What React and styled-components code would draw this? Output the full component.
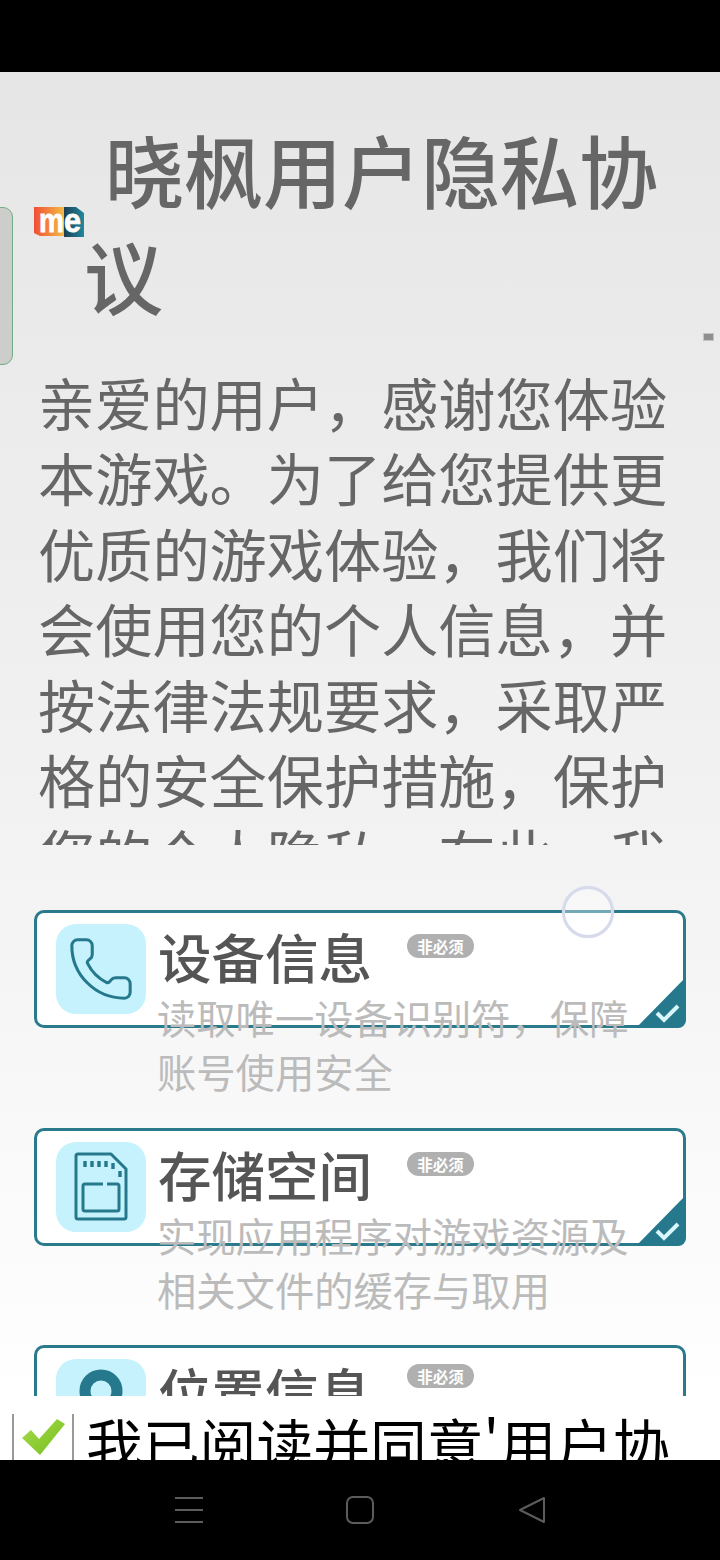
import React from "react";
import styled, { createGlobalStyle } from "styled-components";
import { Phone } from "lucide-react";

const GlobalStyle = createGlobalStyle`
  html, body {
    margin: 0;
    padding: 0;
    background: #000;
  }
  * {
    box-sizing: border-box;
  }
`;

const Page = styled.div`
  position: relative;
  width: 720px;
  height: 1560px;
  display: flex;
  flex-direction: column;
  overflow: hidden;
  background: #000;
  font-family: "Noto Sans CJK SC", "Noto Sans", sans-serif;
`;

const StatusBar = styled.div`
  height: 72px;
  flex: none;
  background: #000;
`;

const Screen = styled.main`
  flex: 1;
  min-height: 0;
  display: flex;
  flex-direction: column;
  background: linear-gradient(180deg, #e6e6e6 0%, #f3f3f3 58%, #ffffff 96%);
`;

const Header = styled.header`
  flex: none;
  display: flex;
  align-items: center;
  padding: 44px 0 0 34px;
`;

const Logo = styled.svg`
  flex: none;
  width: 50px;
  height: 31px;
`;

const Title = styled.h1`
  width: 600px;
  margin: 0;
  font-size: 79px;
  line-height: 106px;
  font-weight: 500;
  color: #666;
  text-indent: 21px;
`;

const Intro = styled.p`
  flex: none;
  width: 640px;
  height: 517px;
  margin: 0 0 0 38px;
  padding-top: 36px;
  overflow: hidden;
  font-size: 57.2px;
  line-height: 75.4px;
  color: #666;
`;

const List = styled.section`
  flex: 1;
  min-height: 0;
  margin-top: 65px;
  padding: 0 34px;
  overflow: hidden;
  display: flex;
  flex-direction: column;
  gap: 99.5px;
`;

const Card = styled.article`
  position: relative;
  flex: none;
  height: 118px;
  display: flex;
  gap: 14px;
  padding: 11px 0 0 19px;
  background: #fff;
  border: 3px solid #2a7a8c;
  border-radius: 10px;
`;

const Tile = styled.div`
  flex: none;
  width: 90px;
  height: 90px;
  display: flex;
  align-items: center;
  justify-content: center;
  background: #c5f2fd;
  border-radius: 20px;
  color: #26788c;
`;

const CardBody = styled.div`
  width: 490px;
`;

const CardHead = styled.div`
  display: flex;
  align-items: flex-start;
  gap: 35px;
`;

const CardTitle = styled.h2`
  margin: -3px 0 0 -2px;
  font-size: 53.5px;
  line-height: 70px;
  font-weight: 500;
  color: #555;
`;

const Badge = styled.span`
  width: 67px;
  height: 24px;
  margin-top: ${(p) => p.$top}px;
  display: flex;
  align-items: center;
  justify-content: center;
  background: #b0b0b0;
  border-radius: 12px;
  color: #fff;
  font-size: 15.5px;
  font-weight: 700;
`;

const CardText = styled.p`
  position: relative;
  margin: -1px 0 0 -3px;
  width: 480px;
  font-size: 39.3px;
  line-height: 54px;
  color: #bbb;
`;

const Corner = styled.svg`
  position: absolute;
  right: -3px;
  bottom: -3px;
  width: 50px;
  height: 51px;
`;

const Footer = styled.footer`
  flex: none;
  height: 64px;
  display: flex;
  gap: 12px;
  padding: 18px 0 0 12px;
  overflow: hidden;
  background: #fff;
`;

const CheckBox = styled.div`
  flex: none;
  width: 62px;
  height: 60px;
  display: flex;
  justify-content: center;
  padding-top: 4px;
  border-left: 2px solid #999;
  border-right: 2px solid #999;
`;

const Agree = styled.div`
  width: 600px;
  margin-top: -10px;
  font-size: 56.8px;
  line-height: 76px;
  color: #000;
`;

const NavBar = styled.nav`
  flex: none;
  height: 100px;
  display: flex;
  align-items: center;
  justify-content: center;
  gap: 143.5px;
  background: #000;
`;

const NavIcon = styled.svg`
  width: 28px;
  height: 28px;
  fill: none;
  stroke: #5c5c5c;
  stroke-width: 2;
`;

const SideTab = styled.div`
  position: absolute;
  left: -2px;
  top: 207px;
  width: 15px;
  height: 158px;
  background: #cdcecc;
  border: 1px solid #72ab85;
  border-radius: 0 10px 10px 0;
`;

const SideMark = styled.div`
  position: absolute;
  left: 703px;
  top: 333px;
  width: 11px;
  height: 8px;
  background: #8f8f8f;
  border: 1px solid #c4c4c4;
`;

const TouchRing = styled.div`
  position: absolute;
  left: 562px;
  top: 886px;
  width: 52px;
  height: 52px;
  border-radius: 50%;
  border: 3px solid #d6daea;
  background: rgba(255, 255, 255, 0.35);
  box-shadow: 0 0 1px #d6daea;
`;

function SdIcon() {
  return (
    <svg width="56" height="72" viewBox="0 0 56 72" fill="none" stroke="currentColor" strokeWidth="3" strokeLinejoin="round">
      <path d="M5 3 H38 L53 18 V66 a2 2 0 0 1 -2 2 H5 a2 2 0 0 1 -2 -2 V5 a2 2 0 0 1 2 -2 Z" />
      <path d="M34 33 H44 a2 2 0 0 1 2 2 V58 a2 2 0 0 1 -2 2 H12 a2 2 0 0 1 -2 -2 V35 a2 2 0 0 1 2 -2 H30" />
      <path d="M12 10 V16 M19 10 V16 M26 10 V16 M33 10 V16 M40 12 V18 M47 20 V26" strokeWidth="3.4" />
    </svg>
  );
}

function PinIcon() {
  return (
    <svg width="60" height="80" viewBox="0 0 60 80" fill="none" stroke="currentColor" strokeWidth="11">
      <circle cx="30" cy="27" r="16" />
    </svg>
  );
}

// full-width comma
const C = "\uFF0C";

const introText = `亲爱的用户${C}感谢您体验本游戏。为了给您提供更优质的游戏体验${C}我们将会使用您的个人信息${C}并按法律法规要求${C}采取严格的安全保护措施${C}保护您的个人隐私。在此${C}我们`;

const cards = [
  {
    title: "设备信息",
    text: `读取唯一设备识别符${C}保障账号使用安全`,
    icon: <Phone size={70} strokeWidth={1.05} />,
    badgeTop: 10,
  },
  {
    title: "存储空间",
    text: "实现应用程序对游戏资源及相关文件的缓存与取用",
    icon: <SdIcon />,
    badgeTop: 10,
  },
  {
    title: "位置信息",
    icon: <PinIcon />,
    badgeTop: 5,
  },
];

export default function App() {
  return (
    <Page lang="zh-CN">
      <GlobalStyle />
      <StatusBar />
      <Screen>
        <Header>
          <Logo viewBox="0 0 50 31">
            <defs>
              <linearGradient id="meLeft" x1="0" x2="1" y1="0" y2="0">
                <stop offset="0" stopColor="#ef4f36" />
                <stop offset="1" stopColor="#f6bb45" />
              </linearGradient>
              <linearGradient id="meRight" x1="0" x2="1" y1="0" y2="0">
                <stop offset="0" stopColor="#1d3f50" />
                <stop offset="1" stopColor="#1e8aa0" />
              </linearGradient>
            </defs>
            <path d="M0 0 H30 V29 H6 L0 26 Z" fill="url(#meLeft)" />
            <path d="M30 0 H42 L50 6 V30 H30 Z" fill="url(#meRight)" />
            <g fontFamily="'Liberation Sans', sans-serif" fontWeight="700" fontSize="34" fill="#fff" stroke="#fff" strokeWidth="0.8">
              <text x="5" y="25" textLength="25" lengthAdjust="spacingAndGlyphs">m</text>
              <text x="30" y="25" textLength="17" lengthAdjust="spacingAndGlyphs">e</text>
            </g>
          </Logo>
          <Title>晓枫用户隐私协议</Title>
        </Header>
        <Intro>{introText}</Intro>
        <List>
          {cards.map((card) => (
            <Card key={card.title}>
              <Tile>{card.icon}</Tile>
              <CardBody>
                <CardHead>
                  <CardTitle>{card.title}</CardTitle>
                  <Badge $top={card.badgeTop}>非必须</Badge>
                </CardHead>
                <CardText>{card.text}</CardText>
              </CardBody>
              <Corner viewBox="0 0 50 51">
                <path d="M50 0 V43 a8 8 0 0 1 -8 8 H0 Z" fill="#26788c" />
                <path d="M21 36 L28 43 L42 29" fill="none" stroke="#d8f6fb" strokeWidth="4" />
              </Corner>
            </Card>
          ))}
        </List>
        <Footer>
          <CheckBox>
            <svg width="44" height="38" viewBox="0 0 44 38">
              <defs>
                <linearGradient id="tick" x1="0" x2="1" y1="0" y2="1">
                  <stop offset="0" stopColor="#a9dc4a" />
                  <stop offset="1" stopColor="#72bd1e" />
                </linearGradient>
              </defs>
              <path d="M1 20 L10 12 L18 21 L36 1 L44 6 L19 37 Z" fill="url(#tick)" />
            </svg>
          </CheckBox>
          <Agree>我已阅读并同意'用户协议'和'隐私政策'</Agree>
        </Footer>
      </Screen>
      <NavBar>
        <NavIcon viewBox="0 0 28 28">
          <path d="M0 2 H28 M0 14 H28 M0 26 H28" />
        </NavIcon>
        <NavIcon viewBox="0 0 28 28">
          <rect x="1" y="1" width="26" height="26" rx="6" />
        </NavIcon>
        <NavIcon viewBox="0 0 28 28">
          <path d="M2 14 L26 2 V26 Z" strokeLinejoin="round" />
        </NavIcon>
      </NavBar>
      <SideTab />
      <SideMark />
      <TouchRing />
    </Page>
  );
}
